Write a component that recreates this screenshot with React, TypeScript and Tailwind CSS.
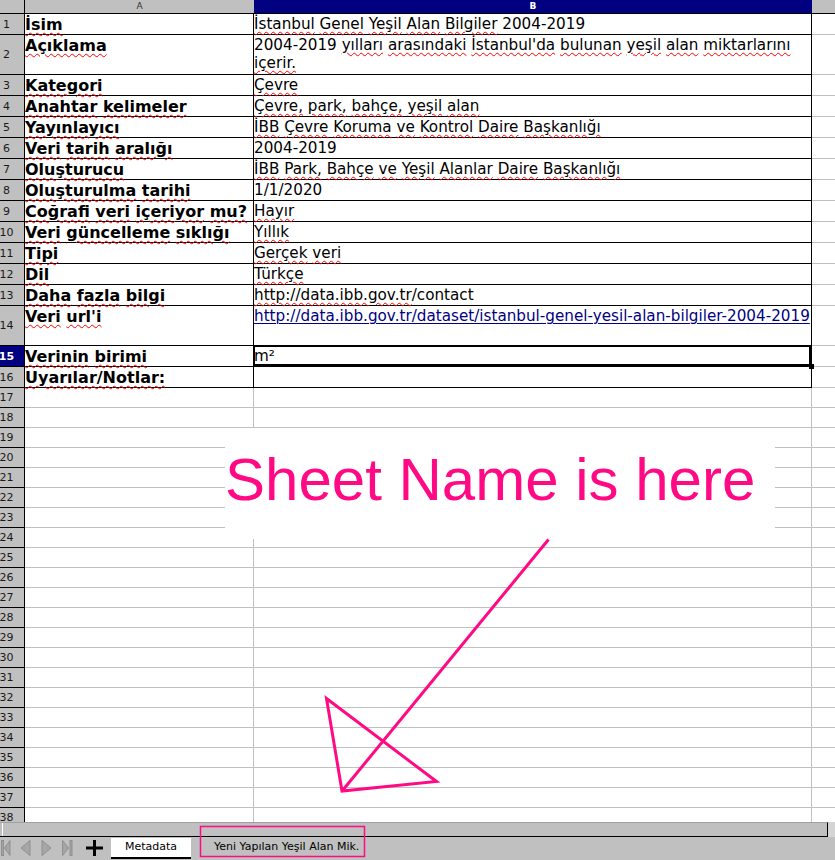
import React from "react";

const wavy =
  "underline decoration-wavy decoration-[#ff0000] decoration-1 underline-offset-[2px]";

// spell-check style: every word gets the red wave, numbers do not
const Sp = ({ text }: { text: string }) => (
  <>
    {text.split(" ").map((w, i) => (
      <React.Fragment key={i}>
        {i > 0 && " "}
        {/^[\d\-\/]+$/.test(w) ? w : <span className={wavy}>{w}</span>}
      </React.Fragment>
    ))}
  </>
);

interface Row {
  n: number;
  h: number;
  a?: string;
  b?: React.ReactNode;
}

const rows: Row[] = [
  { n: 1, h: 21, a: "İsim", b: <Sp text="İstanbul Genel Yeşil Alan Bilgiler 2004-2019" /> },
  {
    n: 2,
    h: 40,
    a: "Açıklama",
    b: (
      <>
        <Sp text="2004-2019 yılları arasındaki İstanbul'da bulunan yeşil alan miktarlarını" />
        <br />
        <Sp text="içerir." />
      </>
    ),
  },
  { n: 3, h: 21, a: "Kategori", b: <Sp text="Çevre" /> },
  { n: 4, h: 21, a: "Anahtar kelimeler", b: <Sp text="Çevre, park, bahçe, yeşil alan" /> },
  { n: 5, h: 21, a: "Yayınlayıcı", b: <Sp text="İBB Çevre Koruma ve Kontrol Daire Başkanlığı" /> },
  { n: 6, h: 21, a: "Veri tarih aralığı", b: "2004-2019" },
  { n: 7, h: 21, a: "Oluşturucu", b: <Sp text="İBB Park, Bahçe ve Yeşil Alanlar Daire Başkanlığı" /> },
  { n: 8, h: 21, a: "Oluşturulma tarihi", b: "1/1/2020" },
  { n: 9, h: 21, a: "Coğrafi veri içeriyor mu?", b: <Sp text="Hayır" /> },
  { n: 10, h: 21, a: "Veri güncelleme sıklığı", b: <Sp text="Yıllık" /> },
  { n: 11, h: 21, a: "Tipi", b: <Sp text="Gerçek veri" /> },
  { n: 12, h: 21, a: "Dil", b: <Sp text="Türkçe" /> },
  {
    n: 13,
    h: 21,
    a: "Daha fazla bilgi",
    b: (
      <>
        <span className={wavy}>http://data.ibb.gov.tr</span>/contact
      </>
    ),
  },
  {
    n: 14,
    h: 40,
    a: "Veri url'i",
    b: (
      <span className="text-[#000080] underline decoration-1 underline-offset-2">
        http://data.ibb.gov.tr/dataset/istanbul-genel-yesil-alan-bilgiler-2004-2019
      </span>
    ),
  },
  { n: 15, h: 21, a: "Verinin birimi", b: "m²" },
  { n: 16, h: 21, a: "Uyarılar/Notlar:" },
];

for (let n = 17; n <= 38; n++) rows.push({ n, h: 20 });

const rowHeight = (h: number) =>
  h === 40 ? "h-[40px]" : h === 21 ? "h-[21px]" : "h-[20px]";

const SheetRow = ({ row }: { row: Row }) => {
  const boxed = row.n <= 16;
  const sel = row.n === 15;
  const line = boxed ? "border-black" : "border-[#c0c0c0]";

  return (
    <div className={`flex shrink-0 ${rowHeight(row.h)}`}>
      <div
        className={`flex w-[25px] shrink-0 items-center overflow-hidden border-r border-b border-black text-[11px] leading-[normal] ${
          sel ? "bg-[#000080] font-bold text-white" : "bg-[#c0c0c0] text-[#1a1a1a]"
        }`}
      >
        <div className="flex w-[13px] shrink-0 justify-center">{row.n}</div>
      </div>

      <div
        className={`w-[229px] shrink-0 whitespace-nowrap border-r border-b pt-px text-[16px] font-bold leading-[normal] text-black ${line}`}
      >
        {row.a && <Sp text={row.a} />}
      </div>

      <div
        className={`relative w-[558px] shrink-0 whitespace-nowrap border-r border-b pt-px text-[15.2px] leading-[normal] text-black ${line}`}
      >
        {row.b}
        {sel && (
          <>
            <div className="absolute -top-px -left-px right-0 bottom-0 z-10 border-2 border-black" />
            <div className="absolute right-[-3px] bottom-[-3px] z-10 h-[5px] w-[5px] bg-black" />
          </>
        )}
      </div>

      <div className="flex-1 border-b border-[#c0c0c0]" />
    </div>
  );
};

const TabNav = () => (
  <svg width="80" height="23" viewBox="0 0 80 23" className="shrink-0">
    <g fill="#a6a6a6" stroke="#8f8f8f" strokeWidth="1">
      <rect x="1.5" y="3.5" width="2" height="15" />
      <polygon points="4.5,11 10,3.5 10,18.5" />
      <polygon points="21,11 30,3.5 30,18.5" />
      <polygon points="42,3.5 42,18.5 51,11" />
      <polygon points="62.5,3.5 62.5,18.5 68.5,11" />
      <rect x="70" y="3.5" width="2" height="15" />
    </g>
  </svg>
);

export default function App() {
  return (
    <div className="relative h-[860px] w-[835px] overflow-hidden bg-white font-['DejaVu_Sans',sans-serif]">
      <div className="flex h-[822px] flex-col overflow-hidden">
        {/* column headers */}
        <div className="flex h-[14px] shrink-0">
          <div className="w-[25px] shrink-0 border-r border-b border-black bg-[#c0c0c0]" />
          <div className="flex w-[229px] shrink-0 items-center justify-center border-b border-black bg-[#c0c0c0] text-[9px] leading-none text-[#333]">
            A
          </div>
          <div className="flex w-[558px] shrink-0 items-center justify-center border-b border-black bg-[#000080] text-[9px] font-bold leading-none text-white">
            B
          </div>
          <div className="flex-1 border-b border-black bg-[#c0c0c0]" />
        </div>

        {rows.map((r) => (
          <SheetRow key={r.n} row={r} />
        ))}
      </div>

      {/* horizontal scrollbar */}
      <div className="flex h-[15px]">
        <div className="flex w-[828px] border-t border-r border-b border-t-[#a0a0a0] border-r-black border-b-black bg-[#c0c0c0]">
          <div className="w-[3px] border-r border-white" />
        </div>
        <div className="flex-1 bg-[#d4d4d4]" />
      </div>

      {/* sheet tabs */}
      <div className="flex h-[23px] items-start bg-[#c0c0c0] text-[11px] leading-[normal] text-black">
        <TabNav />
        <svg width="24" height="23" viewBox="0 0 24 23" className="shrink-0">
          <rect x="6" y="9.5" width="17" height="3" fill="#000" />
          <rect x="13" y="3" width="3" height="16" fill="#000" />
        </svg>
        <div className="ml-[7px] mt-px h-[21px] w-[80px] shrink-0 border-b-2 border-black bg-white pt-[2px] text-center">
          Metadata
        </div>
        <div className="pl-[23px] pt-[3px]">Yeni Yapılan Yeşil Alan Mik.</div>
      </div>

      {/* annotation */}
      <div className="absolute top-[428px] left-[225px] h-[111px] w-[550px] bg-white pt-[17px] font-['Liberation_Sans',Arial,sans-serif] text-[60px] leading-[normal] text-[#ff0a84]">
        Sheet Name is here
      </div>

      <svg
        className="pointer-events-none absolute inset-0"
        width="835"
        height="860"
        viewBox="0 0 835 860"
      >
        <g fill="none" stroke="#ff0a84" strokeWidth="3" strokeLinejoin="miter">
          <line x1="548.5" y1="539.5" x2="342.5" y2="790.5" />
          <polygon points="326.5,698.5 436.5,781.5 342,791" />
        </g>
        <rect
          x="200.5"
          y="826.5"
          width="164"
          height="30"
          fill="none"
          stroke="#ff0a84"
          strokeWidth="1.5"
        />
      </svg>
    </div>
  );
}
